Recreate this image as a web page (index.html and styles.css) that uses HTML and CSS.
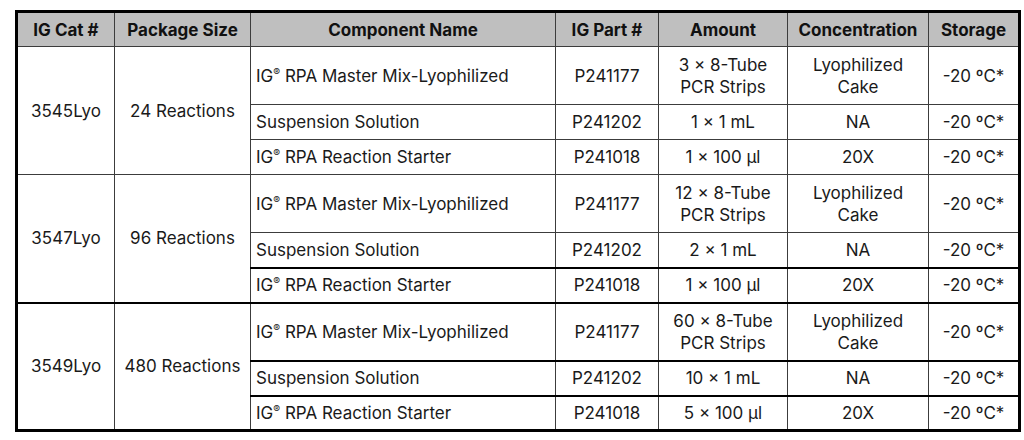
FILE: index.html
```html
<!DOCTYPE html>
<html>
<head>
<meta charset="utf-8">
<link rel="stylesheet" href="styles.css">
</head>
<body>
<div class="page">
<table class="kit">
  <colgroup>
    <col class="c1"><col class="c2"><col class="c3"><col class="c4"><col class="c5"><col class="c6"><col class="c7">
  </colgroup>
  <thead>
    <tr class="head">
      <th>IG Cat #</th><th>Package Size</th><th>Component Name</th><th>IG Part #</th><th>Amount</th><th>Concentration</th><th>Storage</th>
    </tr>
  </thead>
  <tbody>
    <tr class="tall">
      <td rowspan="3">3545Lyo</td><td rowspan="3">24 Reactions</td>
      <td class="name">IG<sup>®</sup> RPA Master Mix-Lyophilized</td><td>P241177</td><td>3 × 8-Tube<br>PCR Strips</td><td>Lyophilized<br>Cake</td><td>-20 ºC*</td>
    </tr>
    <tr class="short">
      <td class="name">Suspension Solution</td><td>P241202</td><td>1 × 1 mL</td><td>NA</td><td>-20 ºC*</td>
    </tr>
    <tr class="short">
      <td class="name">IG<sup>®</sup> RPA Reaction Starter</td><td>P241018</td><td>1 × 100 µl</td><td>20X</td><td>-20 ºC*</td>
    </tr>

    <tr class="tall">
      <td rowspan="3">3547Lyo</td><td rowspan="3">96 Reactions</td>
      <td class="name">IG<sup>®</sup> RPA Master Mix-Lyophilized</td><td>P241177</td><td>12 × 8-Tube<br>PCR Strips</td><td>Lyophilized<br>Cake</td><td>-20 ºC*</td>
    </tr>
    <tr class="short">
      <td class="name">Suspension Solution</td><td>P241202</td><td>2 × 1 mL</td><td>NA</td><td>-20 ºC*</td>
    </tr>
    <tr class="short thick">
      <td class="name">IG<sup>®</sup> RPA Reaction Starter</td><td>P241018</td><td>1 × 100 µl</td><td>20X</td><td>-20 ºC*</td>
    </tr>

    <tr class="tall thick">
      <td rowspan="3">3549Lyo</td><td rowspan="3">480 Reactions</td>
      <td class="name">IG<sup>®</sup> RPA Master Mix-Lyophilized</td><td>P241177</td><td>60 × 8-Tube<br>PCR Strips</td><td>Lyophilized<br>Cake</td><td>-20 ºC*</td>
    </tr>
    <tr class="short thick">
      <td class="name">Suspension Solution</td><td>P241202</td><td>10 × 1 mL</td><td>NA</td><td>-20 ºC*</td>
    </tr>
    <tr class="short thick">
      <td class="name">IG<sup>®</sup> RPA Reaction Starter</td><td>P241018</td><td>5 × 100 µl</td><td>20X</td><td>-20 ºC*</td>
    </tr>
  </tbody>
</table>
</div>
</body>
</html>
```

FILE: styles.css
```css
html, body {
  margin: 0;
  padding: 0;
  background: #ffffff;
}
.page {
  padding: 10px 0 0 15px;
}
.kit {
  border-collapse: collapse;
  table-layout: fixed;
  width: 1003px;
  border: 3px solid #000;
  font-family: "Inter", "Open Sans", "Liberation Sans", sans-serif;
  font-size: 17px;
  color: #1a1a1a;
}
.c1 { width: 98px; }
.c2 { width: 136px; }
.c3 { width: 305px; }
.c4 { width: 103px; }
.c5 { width: 129px; }
.c6 { width: 141px; }
.c7 { width: 91px; }

.kit th, .kit td {
  border: 1px solid #3c3c3c;
  padding: 0 3px;
  text-align: center;
  vertical-align: middle;
  line-height: 22px;
  white-space: nowrap;
  overflow: hidden;
}
.kit th {
  background: #bfbfbf;
  font-weight: 700;
  color: #111;
}
.head { height: 35px; }
.tall { height: 58px; }
.short { height: 35px; }
.kit td.name {
  text-align: left;
  padding-left: 5px;
}
.thick td {
  border-top: 2px solid #000;
}
.kit sup {
  font-size: 0.6em;
  line-height: 0;
  vertical-align: 0.55em;
}
```
